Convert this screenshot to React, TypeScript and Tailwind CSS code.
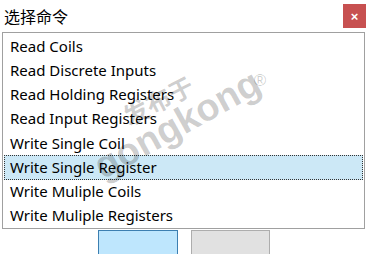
import React from 'react'

const commands = [
  'Read Coils',
  'Read Discrete Inputs',
  'Read Holding Registers',
  'Read Input Registers',
  'Write Single Coil',
  'Write Single Register',
  'Write Muliple Coils',
  'Write Muliple Registers',
]

export default function App() {
  const selected = 5

  return (
    <div className="relative w-[369px] h-[254px] overflow-hidden bg-white font-['Segoe_UI','Noto_Sans',sans-serif]">
      {/* title bar */}
      <div className="flex items-center justify-between h-[32px] pl-[4px] pr-[3px]">
        <span className="text-[16px] text-black font-['Noto_Sans_CJK_SC',sans-serif]">选择命令</span>
        <button className="flex items-center justify-center w-[23px] h-[24px] bg-[#c75050] text-white text-[13px] font-bold leading-none font-['Liberation_Sans',sans-serif]">
          ×
        </button>
      </div>

      {/* list */}
      <div className="mx-[2px] mr-[4px] h-[197px] border border-[#a0a0a0] pt-[1px] px-px">
        {commands.map((c, i) => (
          <div
            key={c}
            className={
              'h-[24.25px] flex items-center pl-[5px] text-[15px] text-black leading-none ' +
              (i === selected ? 'bg-[#cce8f6] border border-dotted border-[#333]' : 'border border-transparent')
            }
          >
            {c}
          </div>
        ))}
      </div>

      {/* buttons (cut off) */}
      <div className="flex gap-[13px] pl-[98px] pt-[1px]">
        <div className="w-[80px] h-[26px] bg-[#bee6fd] border border-[#3c7fb1]" />
        <div className="w-[79px] h-[26px] bg-[#e1e1e1] border border-[#adadad]" />
      </div>

      {/* watermark */}
      <div className="pointer-events-none select-none absolute left-[158px] top-[100px] -translate-x-1/2 -translate-y-1/2 -rotate-[27deg] whitespace-nowrap text-[25px] font-bold leading-none text-black/20 font-['Noto_Sans_CJK_SC',sans-serif]">
        发布于
      </div>
      <div className="pointer-events-none select-none absolute left-[177px] top-[124px] -translate-x-1/2 -translate-y-1/2 -rotate-[29deg] whitespace-nowrap text-[38px] font-bold leading-none text-black/20 font-['Liberation_Sans',sans-serif]">
        gongkong
      </div>
      <div className="pointer-events-none select-none absolute left-[260px] top-[80px] -translate-x-1/2 -translate-y-1/2 whitespace-nowrap text-[17px] leading-none text-black/20 font-['Liberation_Sans',sans-serif]">
        ®
      </div>
    </div>
  )
}
